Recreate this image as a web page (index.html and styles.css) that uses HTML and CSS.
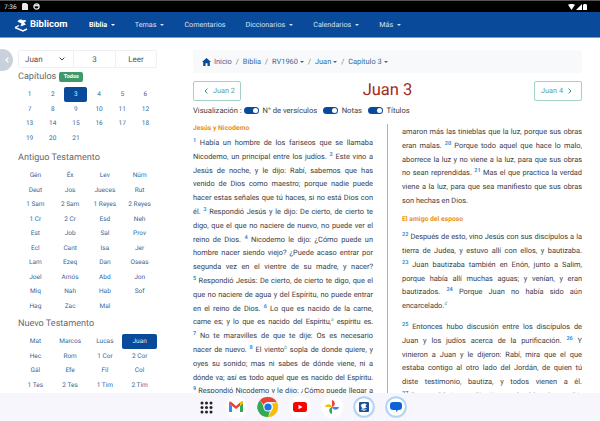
FILE: index.html
```html
<!DOCTYPE html>
<html lang="es">
<head>
<meta charset="utf-8">
<title>Juan 3 - Biblicom</title>
<link rel="stylesheet" href="styles.css">
</head>
<body>
<div class="status">
  <div class="status-left">
    <span>7:36</span>
    <svg width="6" height="7" viewBox="0 0 6 7"><path d="M1 0h3l2 1.500V7H0V1z" fill="#e8e8e8"/></svg>
    <svg width="7" height="7" viewBox="0 0 7 7"><circle cx="3.500" cy="3.500" r="2.600" fill="none" stroke="#e8e8e8" stroke-width="1.300"/><path d="M1 2.600h5" stroke="#e8e8e8" stroke-width="1.400"/></svg>
  </div>
  <div class="status-right">
    <svg width="7" height="6" viewBox="0 0 7 6"><path d="M0 .8C2 -.3 5 -.3 7 .8L3.500 6z" fill="#fff"/></svg>
    <svg width="6" height="6" viewBox="0 0 6 6"><path d="M6 0v6H0z" fill="#fff"/></svg>
    <svg width="4" height="6" viewBox="0 0 4 6"><path d="M1 0h2v.6h1V6H0V.6h1z" fill="#fff"/></svg>
  </div>
</div>
<nav class="nav">
  <a class="brand">
    <svg width="14" height="14" viewBox="0 0 14 14" fill="none" stroke="#fff"><path d="M1 9.500 9 13l4-2" stroke-width="1.400"/><path d="M1 9.500 5 7.500" stroke-width="1.200"/><path d="M3.500 3.500C5 1 8 1 9 2.500 10 1.700 11.500 2 12.500 3L10 4.600 12 6.500 6.500 8.500 7.500 5.500z" fill="#fff" stroke="none"/></svg>
    <span>Biblicom</span>
  </a>
  <a class="nav-link active caret">Biblia</a>
  <a class="nav-link caret">Temas</a>
  <a class="nav-link">Comentarios</a>
  <a class="nav-link caret">Diccionarios</a>
  <a class="nav-link caret">Calendarios</a>
  <a class="nav-link caret">Más</a>
</nav>
<div class="page">
  <aside class="side">
    <button class="collapse" aria-label="Ocultar">
      <svg width="4" height="6" viewBox="0 0 4 6" fill="none" stroke="#fff" stroke-width="1.200"><path d="M3.400.6 1 3l2.400 2.400"/></svg>
    </button>
    <div class="picker">
      <div class="pick pick-book">Juan
        <svg width="6" height="4" viewBox="0 0 6 4" fill="none" stroke="#444" stroke-width="1"><path d="M.6.6 3 3 5.400.6"/></svg>
      </div>
      <div class="pick pick-num">3</div>
      <div class="pick pick-go">Leer</div>
    </div>
    <div class="cap-head"><h2 class="side-title">Capítulos</h2><span class="badge">Todos</span></div>
    <div class="grid chapters">
      <a>1</a><a>2</a><a class="on">3</a><a>4</a><a>5</a><a>6</a>
      <a>7</a><a>8</a><a>9</a><a>10</a><a>11</a><a>12</a>
      <a>13</a><a>14</a><a>15</a><a>16</a><a>17</a><a>18</a>
      <a>19</a><a>20</a><a>21</a>
    </div>
    <h2 class="side-title ot">Antiguo Testamento</h2>
    <div class="grid books">
      <a>Gén</a><a>Éx</a><a>Lev</a><a>Núm</a>
      <a>Deut</a><a>Jos</a><a>Jueces</a><a>Rut</a>
      <a>1 Sam</a><a>2 Sam</a><a>1 Reyes</a><a>2 Reyes</a>
      <a>1 Cr</a><a>2 Cr</a><a>Esd</a><a>Neh</a>
      <a>Est</a><a>Job</a><a>Sal</a><a>Prov</a>
      <a>Ecl</a><a>Cant</a><a>Isa</a><a>Jer</a>
      <a>Lam</a><a>Ezeq</a><a>Dan</a><a>Oseas</a>
      <a>Joel</a><a>Amós</a><a>Abd</a><a>Jon</a>
      <a>Miq</a><a>Nah</a><a>Hab</a><a>Sof</a>
      <a>Hag</a><a>Zac</a><a>Mal</a>
    </div>
    <h2 class="side-title nt">Nuevo Testamento</h2>
    <div class="grid books">
      <a>Mat</a><a>Marcos</a><a>Lucas</a><a class="on">Juan</a>
      <a>Hec</a><a>Rom</a><a>1 Cor</a><a>2 Cor</a>
      <a>Gál</a><a>Efe</a><a>Fil</a><a>Col</a>
      <a>1 Tes</a><a>2 Tes</a><a>1 Tim</a><a>2 Tim</a>
    </div>
  </aside>
  <main class="main">
    <div class="crumbs">
      <svg width="9" height="8" viewBox="0 0 9 8"><path d="M4.500 0 9 4H7.800v4H5.500V5.200h-2V8H1.200V4H0z" fill="#0a4a9b"/></svg>
      <a>Inicio</a><i>/</i><a>Biblia</a><i>/</i><a class="caret">RV1960</a><i>/</i><a class="caret">Juan</a><i>/</i><a class="caret">Capítulo 3</a>
    </div>
    <div class="head">
      <a class="pager pager-prev">
        <svg width="4" height="6" viewBox="0 0 4 6" fill="none" stroke="#3f8f78" stroke-width="1"><path d="M3.400.6 1 3l2.400 2.400"/></svg>
        Juan 2
      </a>
      <h1 class="title">Juan 3</h1>
      <a class="pager pager-next">
        Juan 4
        <svg width="4" height="6" viewBox="0 0 4 6" fill="none" stroke="#3f8f78" stroke-width="1"><path d="M.6.6 3 3 .6 5.400"/></svg>
      </a>
    </div>
    <div class="toggles">
      <span>Visualización :</span>
      <b class="switch"></b><span>N° de versículos</span>
      <b class="switch sw2"></b><span>Notas</span>
      <b class="switch sw2"></b><span>Títulos</span>
    </div>
    <div class="text">
      <section class="col col-a">
        <h3 class="sec">Jesús y Nicodemo</h3>
        <p><sup>1</sup>&nbsp;Había un hombre de los fariseos que se llamaba Nicodemo, un principal entre los judíos. <sup>2</sup>&nbsp;Este vino a Jesús de noche, y le dijo: Rabí, sabemos que has venido de Dios como maestro; porque nadie puede hacer estas señales que tú haces, si no está Dios con él. <sup>3</sup>&nbsp;Respondió Jesús y le dijo: De cierto, de cierto te digo, que el que no naciere de nuevo, no puede ver el reino de Dios. <sup>4</sup>&nbsp;Nicodemo le dijo: ¿Cómo puede un hombre nacer siendo viejo? ¿Puede acaso entrar por segunda vez en el vientre de su madre, y nacer? <sup>5</sup>&nbsp;Respondió Jesús: De cierto, de cierto te digo, que el que no naciere de agua y del Espíritu, no puede entrar en el reino de Dios. <sup>6</sup>&nbsp;Lo que es nacido de la carne, <span class="tight">carne es; y lo que es nacido del Espíritu,<sup class="note">a</sup> espíritu es.</span> <sup>7</sup>&nbsp;No te maravilles de que te dije: Os es necesario nacer&nbsp;de&nbsp;nuevo. <sup>8</sup>&nbsp;El viento<sup class="note">b</sup> sopla de donde quiere, y oyes su sonido; mas ni sabes de dónde viene, ni a <span class="tight">dónde va; así es todo aquel que es nacido del Espíritu.</span> <sup>9</sup>&nbsp;Respondió&nbsp;Nicodemo y le dijo: ¿Cómo puede llegar a ser esto?</p>
      </section>
      <section class="col col-b">
        <p>amaron más las tinieblas que la luz, porque sus obras eran malas. <sup>20</sup>&nbsp;Porque todo aquel que hace lo malo, aborrece la luz y no viene a la luz, para que sus obras no sean reprendidas. <sup>21</sup>&nbsp;Mas el que practica la verdad viene a la luz, para que sea manifiesto que sus obras son hechas en Dios.</p>
        <h3 class="sec sec-b">El amigo del esposo</h3>
        <p><sup>22</sup>&nbsp;Después de esto, vino Jesús con sus discípulos a la tierra de Judea, y estuvo allí con ellos, y bautizaba. <sup>23</sup>&nbsp;Juan bautizaba también en Enón, junto a Salim, porque había allí muchas aguas; y venían, y eran bautizados. <sup>24</sup>&nbsp;Porque Juan no había sido aún encarcelado.<sup class="note">d</sup></p>
        <p class="gap"><sup>25</sup>&nbsp;Entonces hubo discusión entre los discípulos de Juan y los judíos acerca de la purificación. <sup>26</sup>&nbsp;Y vinieron a Juan y le dijeron: Rabí, mira que el que estaba contigo al otro lado del Jordán, de quien tú diste testimonio, bautiza, y todos vienen a él. <sup>27</sup>&nbsp;Respondió Juan y dijo: No puede el hombre recibir nada, si no le fuere dado del cielo.</p>
      </section>
    </div>
  </main>
</div>
<div class="dock">
  <span class="app app-grid">
    <svg width="13" height="13" viewBox="0 0 13 13" fill="#222"><circle cx="2" cy="2" r="1.500"/><circle cx="6.500" cy="2" r="1.500"/><circle cx="11" cy="2" r="1.500"/><circle cx="2" cy="6.500" r="1.500"/><circle cx="6.500" cy="6.500" r="1.500"/><circle cx="11" cy="6.500" r="1.500"/><circle cx="2" cy="11" r="1.500"/><circle cx="6.500" cy="11" r="1.500"/><circle cx="11" cy="11" r="1.500"/></svg>
  </span>
  <span class="app">
    <svg width="22" height="22" viewBox="0 0 22 22"><circle cx="11" cy="11" r="11" fill="#fff"/><path d="M4 7v9h3v-6z" fill="#4285f4"/><path d="M15 16h3V7l-3 3z" fill="#34a853"/><path d="M4 7.500 11 13l7-5.500-.6-2.200L15 6.500 11 10 7 6.500 4.800 5.300z" fill="#ea4335"/><path d="M15 6.500V10l3-2.500V6c0-1-1.500-1.500-3 .5z" fill="#fbbc04"/></svg>
  </span>
  <span class="app">
    <svg width="22" height="22" viewBox="0 0 22 22"><circle cx="11" cy="11" r="10.500" fill="#e8eaed"/><path d="M11 1a10 10 0 0 1 8.700 5H11a5 5 0 0 0-4.500 2.800L3 4.200A10 10 0 0 1 11 1z" fill="#ea4335"/><path d="M19.700 6A10 10 0 0 1 11 21l4.300-7.500A5 5 0 0 0 15 8z" fill="#fbbc04"/><path d="M3 4.200 7 11a5 5 0 0 0 6 3.700L11 21A10 10 0 0 1 3 4.200z" fill="#34a853"/><circle cx="11" cy="11" r="4.600" fill="#fff"/><circle cx="11" cy="11" r="3.600" fill="#1a73e8"/></svg>
  </span>
  <span class="app">
    <svg width="22" height="22" viewBox="0 0 22 22"><circle cx="11" cy="11" r="11" fill="#fff"/><rect x="4" y="6" width="14" height="10" rx="2.800" fill="#f00"/><path d="M9.500 8.800 13.500 11l-4 2.200z" fill="#fff"/></svg>
  </span>
  <span class="app">
    <svg width="22" height="22" viewBox="0 0 22 22"><circle cx="11" cy="11" r="11" fill="#fff"/><path d="M11 11H4a3.600 3.600 0 0 1 7 0z" fill="#fbbc04"/><path d="M11 11V4a3.600 3.600 0 0 1 0 7z" fill="#ea4335"/><path d="M11 11h7a3.600 3.600 0 0 1-7 0z" fill="#4285f4"/><path d="M11 11v7a3.600 3.600 0 0 1 0-7z" fill="#34a853"/></svg>
  </span>
  <span class="app">
    <svg width="22" height="22" viewBox="0 0 22 22"><circle cx="11" cy="11" r="9.800" fill="#fff" stroke="#b3d3f5" stroke-width="2"/><rect x="6" y="6" width="10" height="10" rx="1" fill="#1d4f96"/><path d="M8 9c2-1.500 4-1.500 5.500-.5L12 10l1.500 1.500-4 1.200zM8 13.500l3 1 2.500-1" fill="#fff" stroke="#fff" stroke-width=".5"/></svg>
  </span>
  <span class="app">
    <svg width="22" height="22" viewBox="0 0 22 22"><circle cx="11" cy="11" r="9.800" fill="#fff" stroke="#b3d3f5" stroke-width="2"/><path d="M8 6h6a3 3 0 0 1 3 3v2a3 3 0 0 1-3 3h-1l-1.800 2.200V14H8a3 3 0 0 1-3-3V9a3 3 0 0 1 3-3z" fill="#0b63d6"/></svg>
  </span>
</div>
</body>
</html>
```

FILE: styles.css
```css
* { box-sizing: border-box; }
html, body { margin: 0; padding: 0; }
body {
  width: 600px;
  height: 421px;
  overflow: hidden;
  position: relative;
  background: #fff;
  font-family: Roboto, "Liberation Sans", sans-serif;
  color: #3c4045;
  text-rendering: geometricPrecision;
}
a { text-decoration: none; }

.status {
  height: 12px;
  background: #000;
  border-top: 1px solid #555;
  color: #e8e8e8;
  font-size: 6.5px;
  display: flex;
  justify-content: space-between;
  align-items: center;
  padding: 0 13px 0 4px;
}
.status-left, .status-right { display: flex; align-items: center; }
.status-left { gap: 5px; }
.status-right { gap: 1px; }

.nav {
  height: 26px;
  background: #0a4a9b;
  border-bottom: 1px solid #7c9cc6;
  display: flex;
  align-items: center;
  padding-left: 14px;
  font-size: 7.2px;
}
.brand {
  display: flex;
  align-items: center;
  gap: 2px;
  color: #fff;
  font-size: 9.5px;
  font-weight: 700;
  width: 75px;
}
.nav-link { color: #d5e1f1; margin-right: 20px; }
.nav-link.active { color: #fff; font-weight: 700; margin-right: 19.5px; }
.caret::after {
  content: "";
  display: inline-block;
  margin-left: 4px;
  vertical-align: 1.5px;
  border-left: 2.5px solid transparent;
  border-right: 2.5px solid transparent;
  border-top: 2.5px solid currentColor;
}

.page { display: flex; }

.side {
  width: 193px;
  flex: none;
  padding: 12px 36px 0 18px;
  position: relative;
}
.collapse {
  position: absolute;
  left: -9px;
  top: 11px;
  width: 22px;
  height: 22px;
  border: 0;
  border-radius: 50%;
  background: #c9d2dc;
  display: flex;
  align-items: center;
  justify-content: center;
  padding: 0 0 0 9px;
}
.picker {
  display: flex;
  height: 18px;
  border: 1px solid #eef0f3;
  border-radius: 2px;
  font-size: 8px;
  color: #555;
}
.pick { display: flex; align-items: center; justify-content: center; }
.pick-book { width: 54px; justify-content: space-between; padding: 0 8px 0 6px; }
.pick-num { width: 42px; border-left: 1px solid #eef0f3; }
.pick-go { flex: 1; border-left: 1px solid #eef0f3; }

.side-title {
  margin: 0;
  font-size: 9.1px;
  font-weight: 400;
  color: #666b70;
}
.cap-head { display: flex; align-items: center; gap: 3px; height: 14px; margin-top: 2px; }
.badge {
  background: #3d9a6b;
  color: #fff;
  font-size: 5.5px;
  font-weight: 700;
  border-radius: 2px;
  width: 24px;
  height: 10px;
  display: flex;
  align-items: center;
  justify-content: center;
}
.grid { display: grid; grid-auto-rows: 14.5px; margin-top: 3px; }
.chapters { grid-template-columns: repeat(6, 1fr); }
.books { grid-template-columns: repeat(4, 1fr); }
.grid a {
  display: flex;
  align-items: center;
  justify-content: center;
  color: #37689a;
  font-size: 6.5px;
  border-radius: 2px;
}
.grid a.on { background: #0a4a9b; color: #dfe9f6; }
.ot { margin-top: 7px; line-height: 12px; }
.ot + .grid { margin-top: 4px; }
.nt { margin-top: 5px; line-height: 12px; }
.nt + .grid { margin-top: 4px; }

.main { width: 389px; flex: none; padding-top: 12px; }
.crumbs {
  height: 23px;
  background: #f8f9fb;
  border-radius: 2px;
  display: flex;
  align-items: center;
  padding-left: 9px;
  font-size: 7.4px;
  color: #37689a;
}
.crumbs svg { margin-right: 3px; }
.crumbs i { font-style: normal; color: #777; margin: 0 4px; }
.crumbs .caret::after { margin-left: 2px; }
.head {
  display: flex;
  align-items: center;
  justify-content: space-between;
  margin-top: 7px;
  height: 21px;
}
.pager {
  width: 48px;
  height: 20px;
  border: 1px solid #a5d0c4;
  border-radius: 2px;
  display: flex;
  align-items: center;
  gap: 5px;
  color: #63a08c;
  font-size: 7.3px;
}
.pager-prev { padding-left: 10px; }
.pager-next { padding-right: 9px; justify-content: flex-end; }
.title {
  margin: 0;
  font-size: 16.5px;
  font-weight: 400;
  color: #a12a1a;
}
.toggles {
  display: flex;
  align-items: center;
  height: 10px;
  margin-top: 4px;
  font-size: 7.6px;
  color: #3c4045;
}
.switch {
  width: 15px;
  height: 7px;
  border-radius: 4px;
  background: #0a4a9b;
  position: relative;
  margin: 0 4px 0 2px;
}
.sw2 { margin-left: 5.5px; }
.switch::after {
  content: "";
  position: absolute;
  right: 1px;
  top: 1px;
  width: 5px;
  height: 5px;
  border-radius: 50%;
  background: #fff;
}

.text { display: flex; margin-top: 6px; height: 300px; overflow: hidden; }
.col { width: 180px; flex: none; font-size: 7.4px; line-height: 13.8px; }
.col-a { margin-right: 14px; }
.col-b { border-left: 1px solid #8bbce6; padding: 1px 0 0 14px; margin-top: 3px; width: 195px; }
.col p { margin: 0; text-align: justify; }
.col p.gap { margin-top: 7px; }
.tight { letter-spacing: -.12px; }
.sec {
  margin: 2px 0 2px;
  color: #e8931a;
  font-size: 6.8px;
  font-weight: 700;
  line-height: 11px;
}
.sec-b { margin: 6.5px 0 5px; }
sup {
  color: #2f8fe0;
  font-size: 5.5px;
  font-weight: 700;
  line-height: 0;
}
sup.note { color: #55a88c; font-style: italic; font-weight: 400; font-size: 5px; }

.dock {
  position: absolute;
  left: 0;
  right: 0;
  bottom: 0;
  height: 28px;
  background: #f6f6fc;
  display: flex;
  align-items: center;
  justify-content: center;
  gap: 10px;
}
.app { width: 22px; height: 22px; display: flex; align-items: center; justify-content: center; }
.app-grid { justify-content: flex-end; padding-right: 2px; }
```
